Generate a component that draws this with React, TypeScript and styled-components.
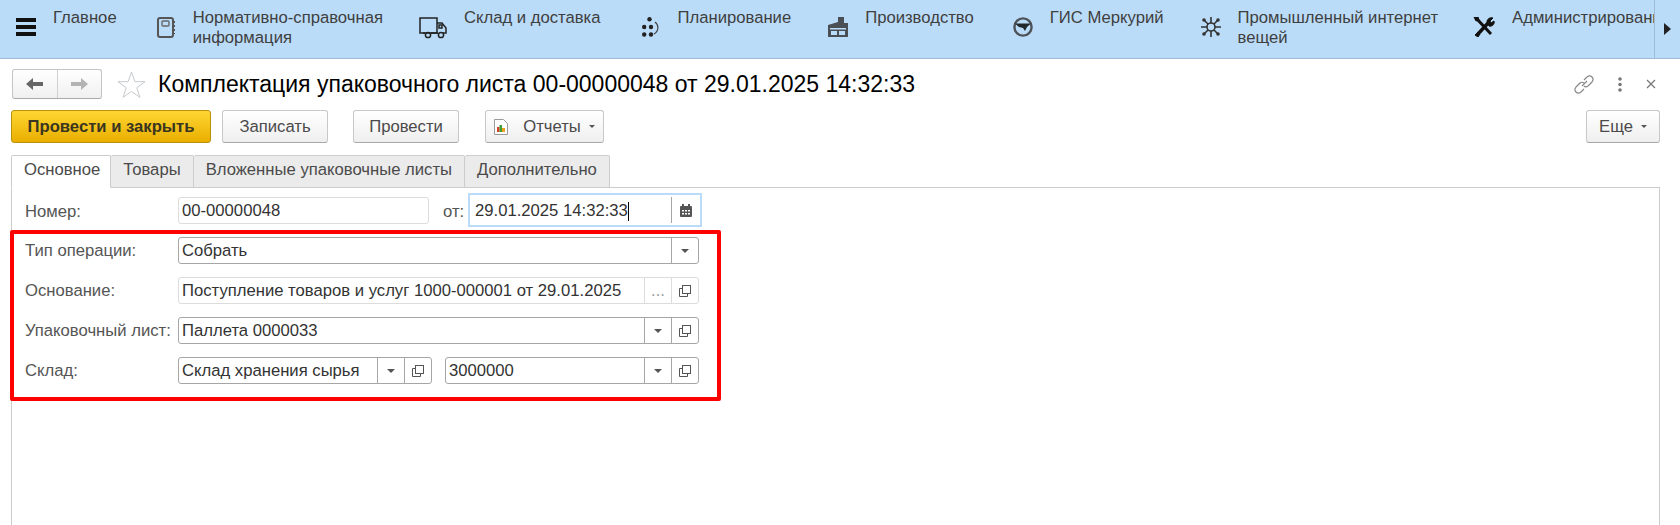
import styled, { createGlobalStyle } from 'styled-components';

const GlobalStyle = createGlobalStyle`
    html, body {
        margin: 0;
        padding: 0;
        background: #fff;
        font-family: 'Liberation Sans', Arial, sans-serif;
    }
`;

const MenuIcon = () => (
    <svg width="20" height="20" viewBox="0 0 20 20">
        <rect x="0" y="1" width="20" height="4" fill="#111" />
        <rect x="0" y="8" width="20" height="4" fill="#111" />
        <rect x="0" y="15" width="20" height="4" fill="#111" />
    </svg>
);

const NotebookIcon = () => (
    <svg width="19" height="21" viewBox="0 0 19 21" fill="none">
        <rect x="1" y="1" width="15" height="19" rx="2" stroke="#555" strokeWidth="2" />
        <rect x="5" y="4" width="7" height="5" rx="1" stroke="#666" strokeWidth="1.4" />
        <path d="M17 4v2M17 8v2M17 12v2M17 16v1" stroke="#555" strokeWidth="2" />
    </svg>
);

const TruckIcon = () => (
    <svg width="28" height="22" viewBox="0 0 28 22" fill="none" stroke="#222" strokeWidth="1.5">
        <rect x="1" y="1" width="17" height="15" />
        <path d="M18 6h5l4 5v5h-3" />
        <rect x="20" y="8" width="3" height="3" />
        <path d="M4 16h2M12 16h7" />
        <circle cx="9" cy="18" r="2.6" />
        <circle cx="22" cy="18" r="2.6" />
    </svg>
);

const PlanIcon = () => (
    <svg width="18" height="20" viewBox="0 0 18 20" fill="#222">
        <circle cx="7.500" cy="2.200" r="2.200" />
        <circle cx="2.200" cy="10" r="2.200" />
        <circle cx="9" cy="10" r="2.200" />
        <circle cx="2.200" cy="17.500" r="2.200" />
        <circle cx="9" cy="17.500" r="2.200" />
        <path d="M13 5c4 3 4 9-1 12" fill="none" stroke="#444" strokeWidth="1.2" />
    </svg>
);

const FactoryIcon = () => (
    <svg width="20" height="20" viewBox="0 0 20 20" fill="#4a4f55">
        <path d="M10 0h6v6h4v14H0V8l10-3z" />
        <rect x="2" y="11" width="16" height="1.500" fill="#bbdcf8" />
        <rect x="3" y="14" width="6" height="4" fill="#bbdcf8" />
        <rect x="11" y="14" width="6" height="4" fill="#bbdcf8" />
    </svg>
);

const GisIcon = () => (
    <svg width="20" height="20" viewBox="0 0 20 20" fill="none">
        <circle cx="10" cy="10" r="8.600" stroke="#4d5358" strokeWidth="2.400" />
        <path d="M2 6.500h16l-4 3.500-2 4-2-3-4-1z" fill="#23282c" />
    </svg>
);

const IotIcon = () => (
    <svg width="20" height="20" viewBox="0 0 20 20" fill="#333" stroke="#333" strokeWidth="1.600">
        <circle cx="10" cy="10" r="4" fill="none" />
        <path d="M10 0v6M10 14v6M0 10h6M14 10h6M3 3l4 4M17 3l-4 4M3 17l4-4M17 17l-4-4" />
        <circle cx="3" cy="3" r="1" />
        <circle cx="17" cy="3" r="1" />
        <circle cx="3" cy="17" r="1" />
        <circle cx="17" cy="17" r="1" />
    </svg>
);

const AdminIcon = () => (
    <svg width="22" height="20" viewBox="0 0 22 20" fill="none" stroke="#111">
        <path d="M3 1l15 16" strokeWidth="3" />
        <path d="M1 0l4 0 1 3-3 1z" fill="#111" strokeWidth="1" />
        <path d="M5 17L16 5" strokeWidth="3.400" />
        <path d="M14 5c0-3 3-5 6-4l-3 3 1 2 3-2c1 3-2 6-5 5z" fill="#111" strokeWidth="1" />
        <path d="M2 18l3-3 2 2-2 3z" fill="#111" strokeWidth="1" />
    </svg>
);

const ArrowLeftIcon = () => (
    <svg width="17" height="12" viewBox="0 0 17 12" fill="#666">
        <path d="M7 0v4h10v4H7v4L0 6z" />
    </svg>
);

const ArrowRightIcon = () => (
    <svg width="17" height="12" viewBox="0 0 17 12" fill="#b4b4b4">
        <path d="M10 0v4H0v4h10v4l7-6z" />
    </svg>
);

const StarIcon = () => (
    <svg width="29" height="27" viewBox="0 0 29 27" fill="#fff" stroke="#c6c9cc">
        <path d="M14.500 1l3.400 9.700h10.100l-8.200 6 3.100 9.600-8.400-5.900-8.400 5.900 3.100-9.600-8.200-6h10.100z" />
    </svg>
);

const LinkIcon = () => (
    <svg width="20" height="19" viewBox="0 0 20 19" fill="none" stroke="#888" strokeWidth="1.200">
        <path d="M8 11l5-5" />
        <path d="M10 5l3-3c2-1.500 4-1 5 0s1.500 3 0 5l-4 4c-1.500 1-3 1-4 0" />
        <path d="M10 8c-1-1-3-1-4 0l-4 4c-1.500 2-1 4 0 5s3 1.500 5 0l3-3" />
    </svg>
);

const DotsIcon = () => (
    <svg width="4" height="15" viewBox="0 0 4 15" fill="#777">
        <circle cx="2" cy="2" r="1.800" />
        <circle cx="2" cy="7.500" r="1.800" />
        <circle cx="2" cy="13" r="1.800" />
    </svg>
);

const CloseIcon = () => (
    <svg width="10" height="10" viewBox="0 0 10 10" stroke="#777" strokeWidth="1.200">
        <path d="M1 1l8 8M9 1l-8 8" />
    </svg>
);

const ReportIcon = () => (
    <svg width="14" height="16" viewBox="0 0 14 16" fill="none">
        <path d="M.5.5h9l4 4v11H.5z" fill="#fff" stroke="#9a9a9a" />
        <rect x="3" y="8" width="2.500" height="5" fill="#d9402b" />
        <rect x="5.500" y="6" width="2.500" height="7" fill="#3f9e3a" />
        <rect x="8" y="9" width="3" height="4" fill="#e9a020" />
    </svg>
);

const CopyIcon = () => (
    <svg width="12" height="12" viewBox="0 0 12 12" fill="none" stroke="#555">
        <rect x="3.500" y=".5" width="8" height="8" />
        <path d="M3.500 3.500H.5v8h8V8.500" />
    </svg>
);

const CalendarIcon = () => (
    <svg width="12" height="13" viewBox="0 0 12 13" fill="#555">
        <path d="M1 2h1V0h2v2h4V0h2v2h1a1 1 0 0 1 1 1v9a1 1 0 0 1-1 1H1a1 1 0 0 1-1-1V3a1 1 0 0 1 1-1z" />
        <path
            d="M2 6h2v1.500H2zM5 6h2v1.500H5zM8 6h2v1.500H8zM2 9h2v1.500H2zM5 9h2v1.500H5zM8 9h2v1.500H8z"
            fill="#fff"
        />
    </svg>
);

const menuItems = [
    { icon: <MenuIcon />, lines: ['Главное'], gap: 40 },
    { icon: <NotebookIcon />, lines: ['Нормативно-справочная', 'информация'], gap: 36 },
    { icon: <TruckIcon />, lines: ['Склад и доставка'], gap: 42 },
    { icon: <PlanIcon />, lines: ['Планирование'], gap: 37 },
    { icon: <FactoryIcon />, lines: ['Производство'], gap: 39 },
    { icon: <GisIcon />, lines: ['ГИС Меркурий'], gap: 37 },
    { icon: <IotIcon />, lines: ['Промышленный интернет', 'вещей'], gap: 35 },
    { icon: <AdminIcon />, lines: ['Администрирование'], gap: 0 },
];

export default function App() {
    return (
        <StyledPage>
            <GlobalStyle />
            <StyledTopBar>
                <StyledMenu>
                    {menuItems.map((item) => (
                        <StyledMenuItem key={item.lines[0]} $gap={item.gap}>
                            <StyledMenuIcon>{item.icon}</StyledMenuIcon>
                            <StyledMenuText>
                                {item.lines.map((line) => (
                                    <div key={line}>{line}</div>
                                ))}
                            </StyledMenuText>
                        </StyledMenuItem>
                    ))}
                </StyledMenu>
                <StyledMenuMore>
                    <StyledMenuArrow />
                </StyledMenuMore>
            </StyledTopBar>

            <StyledTitleRow>
                <StyledNav>
                    <StyledNavButton>
                        <ArrowLeftIcon />
                    </StyledNavButton>
                    <StyledNavButton $last>
                        <ArrowRightIcon />
                    </StyledNavButton>
                </StyledNav>
                <StyledStar>
                    <StarIcon />
                </StyledStar>
                <StyledTitle>Комплектация упаковочного листа 00-00000048 от 29.01.2025 14:32:33</StyledTitle>
                <StyledWindowIcons>
                    <LinkIcon />
                    <DotsIcon />
                    <CloseIcon />
                </StyledWindowIcons>
            </StyledTitleRow>

            <StyledToolbar>
                <StyledPrimaryButton>Провести и закрыть</StyledPrimaryButton>
                <StyledButton $width={106}>Записать</StyledButton>
                <StyledButton $width={106} $offset={14}>
                    Провести
                </StyledButton>
                <StyledButton $width={119} $offset={15}>
                    <ReportIcon />
                    <StyledButtonLabel>Отчеты</StyledButtonLabel>
                    <StyledCaret />
                </StyledButton>
                <StyledMoreButton>
                    Еще
                    <StyledCaret />
                </StyledMoreButton>
            </StyledToolbar>

            <StyledTabs>
                <StyledTab $active>Основное</StyledTab>
                <StyledTab>Товары</StyledTab>
                <StyledTab>Вложенные упаковочные листы</StyledTab>
                <StyledTab>Дополнительно</StyledTab>
            </StyledTabs>

            <StyledPanel>
                <StyledNumberRow>
                    <StyledLabel $top={3}>Номер:</StyledLabel>
                    <StyledField $muted $width={251}>
                        <StyledValue>00-00000048</StyledValue>
                    </StyledField>
                    <StyledFromLabel>от:</StyledFromLabel>
                    <StyledDateField>
                        <StyledDateValue>
                            29.01.2025 14:32:33
                            <StyledCursor />
                        </StyledDateValue>
                        <StyledDateButton>
                            <CalendarIcon />
                        </StyledDateButton>
                    </StyledDateField>
                </StyledNumberRow>

                <StyledHighlight>
                    <StyledRow>
                        <StyledLabel>Тип операции:</StyledLabel>
                        <StyledField>
                            <StyledValue>Собрать</StyledValue>
                            <StyledFieldButton>
                                <StyledCaret />
                            </StyledFieldButton>
                        </StyledField>
                    </StyledRow>
                    <StyledRow>
                        <StyledLabel>Основание:</StyledLabel>
                        <StyledField $muted>
                            <StyledValue>Поступление товаров и услуг 1000-000001 от 29.01.2025</StyledValue>
                            <StyledFieldButton $muted>
                                <StyledEllipsis>...</StyledEllipsis>
                            </StyledFieldButton>
                            <StyledFieldButton $muted>
                                <CopyIcon />
                            </StyledFieldButton>
                        </StyledField>
                    </StyledRow>
                    <StyledRow>
                        <StyledLabel>Упаковочный лист:</StyledLabel>
                        <StyledField>
                            <StyledValue>Паллета 0000033</StyledValue>
                            <StyledFieldButton>
                                <StyledCaret />
                            </StyledFieldButton>
                            <StyledFieldButton>
                                <CopyIcon />
                            </StyledFieldButton>
                        </StyledField>
                    </StyledRow>
                    <StyledRow>
                        <StyledLabel>Склад:</StyledLabel>
                        <StyledFieldPair>
                            <StyledField>
                                <StyledValue>Склад хранения сырья</StyledValue>
                                <StyledFieldButton>
                                    <StyledCaret />
                                </StyledFieldButton>
                                <StyledFieldButton>
                                    <CopyIcon />
                                </StyledFieldButton>
                            </StyledField>
                            <StyledField>
                                <StyledValue>3000000</StyledValue>
                                <StyledFieldButton>
                                    <StyledCaret />
                                </StyledFieldButton>
                                <StyledFieldButton>
                                    <CopyIcon />
                                </StyledFieldButton>
                            </StyledField>
                        </StyledFieldPair>
                    </StyledRow>
                </StyledHighlight>
            </StyledPanel>
        </StyledPage>
    );
}

const StyledPage = styled.div`
    display: flex;
    flex-direction: column;
    height: 525px;
    overflow: hidden;
    background: #fff;
    font-size: 16.67px;
    color: #444;
`;

const StyledTopBar = styled.div`
    display: flex;
    flex-shrink: 0;
    height: 58px;
    background: #bbdcf8;
    border-bottom: 1px solid #9dbbd6;
`;

const StyledMenu = styled.div`
    display: flex;
    flex: 1;
    min-width: 0;
    overflow: hidden;
    padding-left: 16px;
`;

const StyledMenuItem = styled.div<{ $gap: number }>`
    display: flex;
    flex-shrink: 0;
    column-gap: 17px;
    margin-right: ${(p) => p.$gap}px;
`;

const StyledMenuIcon = styled.div`
    padding-top: 17px;

    svg {
        display: block;
    }
`;

const StyledMenuText = styled.div`
    padding-top: 8px;
    line-height: 20px;
    white-space: nowrap;
    color: #3f3f3f;
`;

const StyledMenuMore = styled.div`
    display: flex;
    flex-shrink: 0;
    align-items: center;
    justify-content: center;
    width: 25px;
    border-left: 1px solid #9dbbd6;
`;

const StyledMenuArrow = styled.div`
    width: 0;
    height: 0;
    margin-left: -1px;
    border-top: 6px solid transparent;
    border-bottom: 6px solid transparent;
    border-left: 7px solid #222;
`;

const StyledTitleRow = styled.div`
    display: flex;
    flex-shrink: 0;
    align-items: center;
    height: 30px;
    margin-top: 10px;
    padding: 0 24px 0 12px;
`;

const StyledNav = styled.div`
    display: flex;
    box-sizing: border-box;
    width: 90px;
    height: 30px;
    border: 1px solid #c4c4c4;
    border-bottom-color: #aaa;
    border-radius: 3px;
    background: linear-gradient(#fff, #f0f0f0);
`;

const StyledNavButton = styled.div<{ $last?: boolean }>`
    display: flex;
    flex: 1;
    align-items: center;
    justify-content: center;
    border-right: ${(p) => (p.$last ? 'none' : '1px solid #d0d0d0')};
`;

const StyledStar = styled.div`
    margin-left: 15px;

    svg {
        display: block;
    }
`;

const StyledTitle = styled.div`
    margin-left: 12px;
    font-size: 23px;
    line-height: 30px;
    white-space: nowrap;
    color: #000;
`;

const StyledWindowIcons = styled.div`
    display: flex;
    align-items: center;
    column-gap: 24px;
    margin-left: auto;
`;

const StyledToolbar = styled.div`
    display: flex;
    flex-shrink: 0;
    column-gap: 11px;
    height: 33px;
    margin-top: 11px;
    padding: 0 20px 0 11px;
`;

const StyledButton = styled.div<{ $width?: number; $offset?: number }>`
    display: flex;
    box-sizing: border-box;
    align-items: center;
    justify-content: center;
    width: ${(p) => p.$width}px;
    margin-left: ${(p) => p.$offset ?? 0}px;
    border: 1px solid #c8c8c8;
    border-bottom-color: #a8a8a8;
    border-radius: 3px;
    background: linear-gradient(#fff, #efefef);
    color: #4a4a4a;
`;

const StyledPrimaryButton = styled(StyledButton)`
    width: 200px;
    border-color: #b8900c;
    background: linear-gradient(#ffd633, #e9ae00);
    font-weight: bold;
    color: #3a3520;
`;

const StyledMoreButton = styled(StyledButton)`
    width: 74px;
    margin-left: auto;
`;

const StyledButtonLabel = styled.span`
    margin-left: 15px;
`;

const StyledCaret = styled.span`
    display: inline-block;
    width: 0;
    height: 0;
    margin-left: 8px;
    border-top: 3px solid #555;
    border-left: 3px solid transparent;
    border-right: 3px solid transparent;
`;

const StyledTabs = styled.div`
    position: relative;
    z-index: 1;
    display: flex;
    flex-shrink: 0;
    height: 33px;
    margin-top: 12px;
    margin-bottom: -1px;
    padding-left: 11px;
`;

const StyledTab = styled.div<{ $active?: boolean }>`
    display: flex;
    align-items: center;
    padding: 0 ${(p) => (p.$active ? '10px 3px 12px' : '12px 3px')};
    border: 1px solid #ccc;
    border-left-width: ${(p) => (p.$active ? '1px' : '0')};
    border-bottom: 1px solid ${(p) => (p.$active ? '#fff' : '#ccc')};
    border-radius: 2px 2px 0 0;
    background: ${(p) => (p.$active ? '#fff' : '#ebebeb')};
    color: #4a4a4a;
`;

const StyledPanel = styled.div`
    flex: 1;
    margin: 0 20px 0 11px;
    border: 1px solid #ccc;
    border-bottom: none;
`;

const StyledNumberRow = styled.div`
    display: flex;
    align-items: center;
    height: 34px;
    margin-top: 5px;
    padding-left: 13px;
`;

const StyledLabel = styled.div<{ $top?: number }>`
    flex-shrink: 0;
    width: 153px;
    padding-top: ${(p) => p.$top ?? 1}px;
    white-space: nowrap;
    color: #555;
`;

const StyledFromLabel = styled.div`
    width: 25px;
    margin-left: 14px;
    padding-top: 3px;
    color: #555;
`;

const StyledField = styled.div<{ $muted?: boolean; $width?: number }>`
    display: flex;
    box-sizing: border-box;
    flex: ${(p) => (p.$width ? `0 0 ${p.$width}px` : '1')};
    min-width: 0;
    height: 27px;
    border: 1px solid ${(p) => (p.$muted ? '#dcdcdc' : '#a6a6a6')};
    border-radius: 3px;
    background: #fff;
`;

const StyledValue = styled.div`
    flex: 1;
    min-width: 0;
    padding-left: 3px;
    line-height: 26px;
    white-space: nowrap;
    overflow: hidden;
    color: #333;
`;

const StyledFieldButton = styled.div<{ $muted?: boolean }>`
    display: flex;
    flex-shrink: 0;
    align-items: center;
    justify-content: center;
    width: 26px;
    border-left: 1px solid ${(p) => (p.$muted ? '#dcdcdc' : '#a6a6a6')};

    ${StyledCaret} {
        margin-left: 0;
        border-top-width: 4px;
        border-left-width: 4px;
        border-right-width: 4px;
    }
`;

const StyledEllipsis = styled.span`
    margin-top: 1px;
    color: #999;
`;

const StyledDateField = styled.div`
    display: flex;
    box-sizing: border-box;
    width: 234px;
    height: 34px;
    border: 2px solid #bbdcf8;
    background: #fff;
`;

const StyledDateValue = styled.div`
    display: flex;
    flex: 1;
    align-items: center;
    padding: 2px 0 0 5px;
    color: #333;
`;

const StyledCursor = styled.span`
    width: 1px;
    height: 19px;
    background: #000;
`;

const StyledDateButton = styled.div`
    display: flex;
    align-items: center;
    justify-content: center;
    width: 28px;
    margin: 2px 0;
    border-left: 1px solid #a6a6a6;
`;

const StyledHighlight = styled.div`
    display: flex;
    flex-direction: column;
    row-gap: 13px;
    box-sizing: border-box;
    width: 711px;
    height: 171px;
    margin: 3px 0 0 -2px;
    padding: 3px 18px 0 11px;
    border: 4px solid #ff0000;
    border-radius: 2px;
    background: #fff;
`;

const StyledRow = styled.div`
    display: flex;
    align-items: center;
    height: 27px;
`;

const StyledFieldPair = styled.div`
    display: flex;
    flex: 1;
    column-gap: 13px;
    min-width: 0;
`;
